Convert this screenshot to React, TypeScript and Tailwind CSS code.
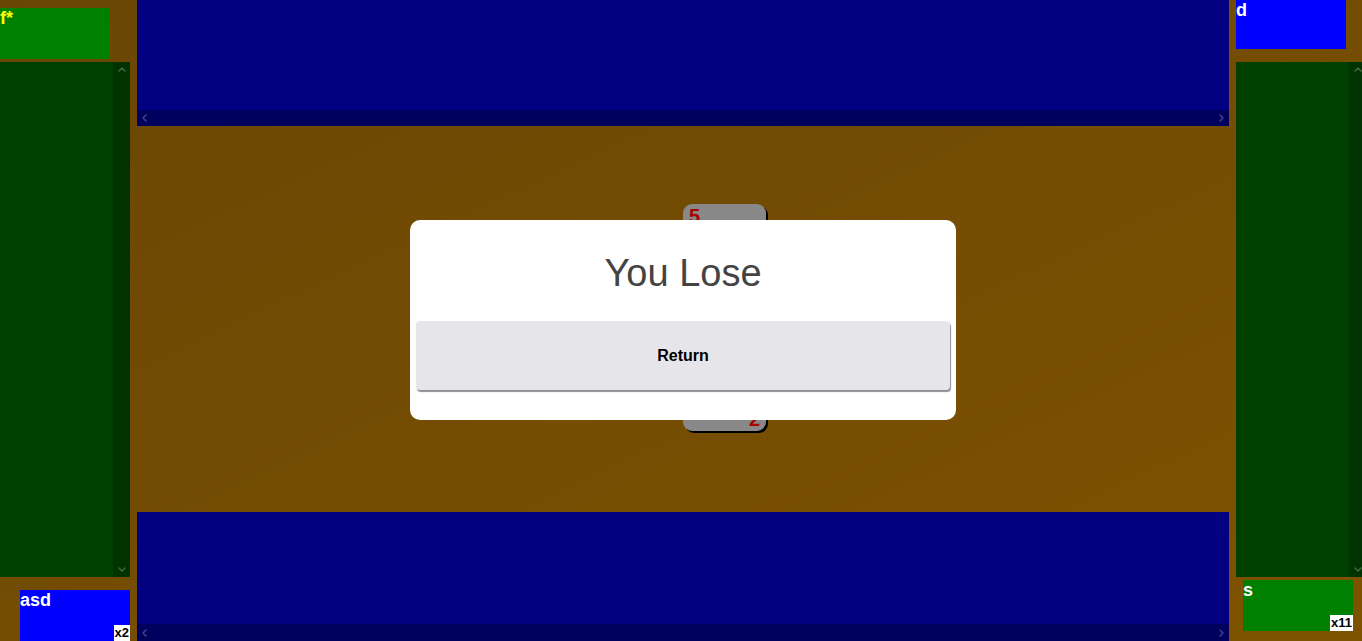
import React from 'react';

type Dir = 'up' | 'down' | 'left' | 'right';

const Chevron: React.FC<{ dir: Dir }> = ({ dir }) => {
  const d = {
    up: 'M2 6l3-3 3 3',
    down: 'M2 4l3 3 3-3',
    left: 'M6 2L3 5l3 3',
    right: 'M4 2l3 3-3 3',
  }[dir];
  return (
    <svg className="w-[10px] h-[10px]" viewBox="0 0 10 10" fill="none" stroke="currentColor" strokeWidth="1.6">
      <path strokeLinecap="round" strokeLinejoin="round" d={d} />
    </svg>
  );
};

const HScroll: React.FC<{ h: string }> = ({ h }) => (
  <div className={`${h} bg-[#00005e] flex items-center justify-between px-[3px] text-white/25`}>
    <Chevron dir="left" />
    <Chevron dir="right" />
  </div>
);

const VScroll: React.FC = () => (
  <div className="w-[17px] h-full bg-[#003300] flex flex-col items-center justify-between py-[3px] text-white/25">
    <Chevron dir="up" />
    <Chevron dir="down" />
  </div>
);

const Seat: React.FC<{ name: string; bg: string; color?: string; count?: string; className?: string }> = ({
  name,
  bg,
  color = 'text-white',
  count,
  className = '',
}) => (
  <div className={`relative w-[110px] h-[51px] ${bg} ${className}`}>
    <span className={`block font-bold text-[18px] leading-[20px] ${color}`}>{name}</span>
    {count && (
      <span className="absolute right-0 bottom-0 bg-white text-black font-bold text-[13px] leading-[16px] px-[1px]">
        {count}
      </span>
    )}
  </div>
);

export default function App() {
  return (
    <div
      className="relative w-full h-[641px] overflow-hidden flex bg-gradient-to-br from-[#6a4605] to-[#7e5300]"
      style={{ fontFamily: '"Liberation Sans", Arial, sans-serif' }}
    >
      {/* Left column */}
      <div className="w-[130px] shrink-0 flex flex-col">
        <Seat name="f*" bg="bg-[#008000]" color="text-[#ffff00]" className="mt-[8px] !w-[109px]" />
        <div className="mt-[3px] h-[515px] bg-[#004000] flex justify-end">
          <VScroll />
        </div>
        <Seat name="asd" bg="bg-[#0000ff]" count="x2" className="ml-[20px] mt-[13px]" />
      </div>

      {/* Center column */}
      <div className="ml-[7px] w-[1092px] shrink-0 flex flex-col">
        <div className="h-[126px] bg-[#000080] flex flex-col justify-end">
          <HScroll h="h-[16px]" />
        </div>
        <div className="h-[386px] pl-[546px] pt-[78px]">
          <div className="relative w-[83px] h-[227px] rounded-[9px] bg-[#888888] shadow-[2px_2px_0_#000]">
            <span className="absolute left-[6px] top-[2px] text-[20px] font-bold text-[#a80000] leading-none">5</span>
            <span className="absolute right-[6px] bottom-[2px] text-[20px] font-bold text-[#a80000] leading-none">2</span>
          </div>
        </div>
        <div className="flex-1 bg-[#000080] flex flex-col justify-end">
          <HScroll h="h-[17px]" />
        </div>
      </div>

      {/* Right column */}
      <div className="ml-[7px] w-[130px] shrink-0 flex flex-col">
        <Seat name="d" bg="bg-[#0000ff]" className="!h-[49px]" />
        <div className="mt-[13px] h-[515px] bg-[#004000] flex justify-end">
          <VScroll />
        </div>
        <Seat name="s" bg="bg-[#008000]" count="x11" className="ml-[7px] mt-[3px]" />
      </div>

      {/* Result dialog */}
      <div className="absolute left-[410px] top-[220px] w-[546px] bg-white rounded-[10px] px-[6px] pb-[30px]">
        <div className="h-[101px] flex items-center justify-center pt-[4px]">
          <h1 className="text-[38px] text-[#444444] leading-none">You Lose</h1>
        </div>
        <button className="w-full h-[69px] bg-[#e6e6ea] rounded-[4px] shadow-[1px_2px_1px_#8f8f94] font-bold text-[16px] text-black">
          Return
        </button>
      </div>
    </div>
  );
}
